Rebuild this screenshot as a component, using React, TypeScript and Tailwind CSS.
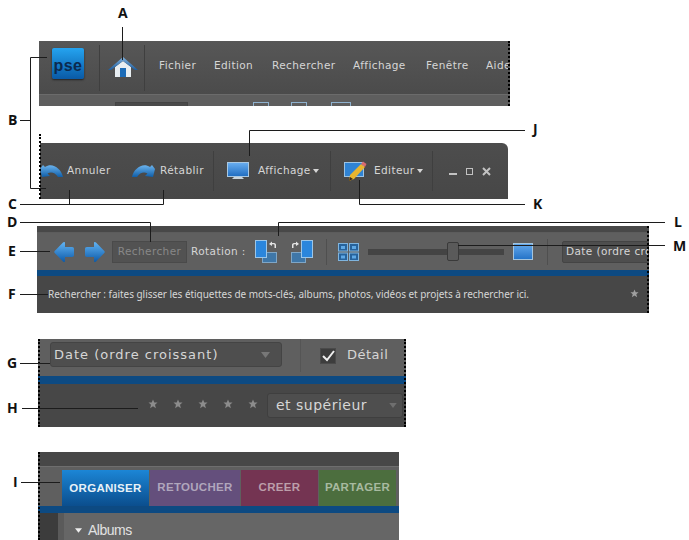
const ui = "font-['DejaVu_Sans',sans-serif] text-[#d6d6d6]";

const Sep = ({ className = "" }: { className?: string }) => <div className={`w-px bg-[#3f3f3f] shrink-0 ${className}`} />;

const Star = ({ color = "#8c8c8c", size = 10 }: { color?: string; size?: number }) => (
  <svg width={size} height={size} viewBox="0 0 10 10" className="shrink-0">
    <path d="M5 .6l1.3 3h3.2L7 5.700l.9 3.500L5 7.300 2.100 9.200 3 5.700.5 3.600h3.200z" fill={color} />
  </svg>
);

const Caret = ({ color = "#d6d6d6", w = 6, h = 4 }: { color?: string; w?: number; h?: number }) => (
  <svg width={w} height={h} viewBox="0 0 6 4" className="shrink-0">
    <path d="M0 0h6L3 4z" fill={color} />
  </svg>
);

const Edge = ({ side }: { side: "left" | "right" }) => (
  <div className={`absolute inset-y-0 w-0 border-l-2 border-dotted border-black ${side === "left" ? "left-0" : "right-0"}`} />
);

const PseLogo = () => (
  <div className="w-[32px] h-[31px] rounded-[2px] bg-gradient-to-b from-[#25a4f0] to-[#0a5aa6] flex items-end justify-center pb-[5px] shadow-[0_1px_2px_#222]">
    <span className="font-['Liberation_Sans',sans-serif] font-bold text-[16px] leading-none text-[#0b2a4f]">pse</span>
  </div>
);

const HomeIcon = () => (
  <svg width="30" height="22" viewBox="0 0 30 22">
    <defs>
      <linearGradient id="roof" x1="0" y1="0" x2="0" y2="1">
        <stop offset="0" stopColor="#7fb2e0" />
        <stop offset="1" stopColor="#1d5c9c" />
      </linearGradient>
    </defs>
    <path d="M7 11l8-6 8 6v10H7z" fill="#e8eef2" />
    <path d="M12 12h6v9h-6z" fill="#1c6cb8" />
    <path d="M0 14L15 1l15 13h-3L15 5 3 14z" fill="url(#roof)" />
  </svg>
);

const UndoIcon = ({ flip = false }: { flip?: boolean }) => (
  <svg width="23" height="14" viewBox="0 0 23 14" className={flip ? "-scale-x-100" : ""}>
    <defs>
      <linearGradient id="undo" x1="0" y1="0" x2="0" y2="1">
        <stop offset="0" stopColor="#6cb4ee" />
        <stop offset="1" stopColor="#0f5ea8" />
      </linearGradient>
    </defs>
    <path d="M0 5l2 8 8-1-2.500-2.500C11 7.500 15 8.500 18 13h5C21 4 12-2 5 3L3 1z" fill="url(#undo)" />
  </svg>
);

const MonitorIcon = () => (
  <svg width="22" height="18" viewBox="0 0 22 18">
    <defs>
      <linearGradient id="screen" x1="0" y1="0" x2="0" y2="1">
        <stop offset="0" stopColor="#69aef0" />
        <stop offset="1" stopColor="#1f6cc0" />
      </linearGradient>
    </defs>
    <rect x=".5" y=".5" width="21" height="14" fill="url(#screen)" stroke="#a9c8e2" />
    <path d="M7 15h8l2 2H5z" fill="#c9d3da" />
  </svg>
);

const EditorIcon = () => (
  <svg width="23" height="21" viewBox="0 0 23 21">
    <rect x=".5" y="1.500" width="19" height="14" fill="#2f83d4" stroke="#9cc3e4" />
    <path d="M6 14L17 3l4 3L10 18l-5 2z" fill="#e8b52e" />
    <path d="M17 3l2-2.400 3.500 2.500L21 6z" fill="#d86a70" />
    <path d="M5 20l1-4 3 2z" fill="#3a2a1a" />
  </svg>
);

const ArrowIcon = ({ flip = false }: { flip?: boolean }) => (
  <svg width="20" height="22" viewBox="0 0 20 22" className={flip ? "-scale-x-100" : ""}>
    <defs>
      <linearGradient id="arrow" x1="0" y1="0" x2="0" y2="1">
        <stop offset="0" stopColor="#62b4f4" />
        <stop offset="1" stopColor="#0c5aa8" />
      </linearGradient>
    </defs>
    <path d="M.7 10L9 1.500c1-1 2-.5 2 .5v4h7c1.500 0 2 .8 2 2v6c0 1.200-.5 2-2 2h-7v4c0 1-1 1.500-2 .5L.7 12c-.6-.6-.6-1.400 0-2z" fill="url(#arrow)" />
  </svg>
);

const RotateIcon = ({ flip = false }: { flip?: boolean }) => (
  <svg width="22" height="23" viewBox="0 0 22 23" className={flip ? "-scale-x-100" : ""}>
    <rect x="7.500" y="12.500" width="14" height="10" fill="#3f77a8" stroke="#7fa6c6" />
    <rect x=".5" y=".5" width="11" height="17" fill="#2b86dc" stroke="#9cc6e8" />
    <path d="M14 4l3-2.500V3h2c1.500 0 2 1 2 2v3h-1.500V5c0-.5-.2-.7-.8-.7H17V6z" fill="#e4e4e4" />
  </svg>
);

const GridIcon = () => (
  <svg width="21" height="18" viewBox="0 0 21 18">
    <g fill="#27639c" stroke="#7fb4de">
      <rect x=".5" y=".5" width="9" height="7.500" />
      <rect x="11.500" y=".5" width="9" height="7.500" />
      <rect x=".5" y="10" width="9" height="7.500" />
      <rect x="11.500" y="10" width="9" height="7.500" />
    </g>
    <g fill="#5fa8e4">
      <rect x="3" y="3" width="4" height="3" />
      <rect x="14" y="3" width="4" height="3" />
      <rect x="3" y="12.500" width="4" height="3" />
      <rect x="14" y="12.500" width="4" height="3" />
    </g>
  </svg>
);

const MenuPanel = () => (
  <section className="relative ml-[39px] w-[471px] h-[65px] flex flex-col overflow-hidden">
    <div className={`h-[53px] bg-gradient-to-b from-[#575757] to-[#4b4b4b] flex items-center pl-[13px] text-[10.5px] tracking-[0.4px] ${ui}`}>
      <div className="mt-[-8px]"><PseLogo /></div>
      <Sep className="h-[46px] ml-[15px]" />
      <div className="ml-[8px] mt-[-1px]"><HomeIcon /></div>
      <Sep className="h-[46px] ml-[6px]" />
      <div className="flex gap-[17px] ml-[14px] mt-[-4px] whitespace-nowrap">
        <span className="w-[38px]">Fichier</span>
        <span className="w-[41px]">Edition</span>
        <span className="w-[64px]">Rechercher</span>
        <span className="w-[56px]">Affichage</span>
        <span className="w-[43px]">Fenêtre</span>
        <span>Aide</span>
      </div>
    </div>
    <div className="h-[12px] border-t border-[#6b6b6b] bg-[#5e5e5e] relative flex items-start pl-[76px] pt-[7px]">
      <div className="w-[73px] h-[6px] bg-[#4a4a4a] border border-[#444]" />
      <div className="w-[16px] h-[5px] border border-[#8fb2cf] ml-[65px]" />
      <div className="w-[16px] h-[5px] border border-[#8fb2cf] ml-[22px]" />
      <div className="w-[20px] h-[5px] border border-[#8fb2cf] ml-[24px]" />
    </div>
    <Edge side="right" />
  </section>
);

const ActionsPanel = () => (
  <section className={`relative ml-[40px] mt-[37px] w-[468px] h-[56px] bg-gradient-to-b from-[#4d4d4d] to-[#474747] rounded-tr-[6px] flex items-center text-[10.5px] tracking-[0.4px] whitespace-nowrap ${ui}`}>
    <div className="flex items-center w-[173px] h-full">
      <UndoIcon />
      <span className="ml-[4px] w-[65px]">Annuler</span>
      <UndoIcon flip />
      <span className="ml-[5px]">Rétablir</span>
    </div>
    <Sep className="h-[40px]" />
    <div className="flex items-center ml-[13px] w-[103px]">
      <MonitorIcon />
      <span className="ml-[9px]">Affichage</span>
      <span className="ml-[2px]"><Caret /></span>
    </div>
    <Sep className="h-[40px]" />
    <div className="flex items-center ml-[13px] w-[88px]">
      <EditorIcon />
      <span className="ml-[7px]">Editeur</span>
      <span className="ml-[2px]"><Caret /></span>
    </div>
    <Sep className="h-[40px]" />
    <div className="flex items-center ml-[16px] gap-[9px] text-[#c2c2c2]">
      <div className="w-[8px] h-[2px] bg-[#c2c2c2] mt-[5px]" />
      <div className="w-[7px] h-[7px] border border-[#c2c2c2]" />
      <svg width="9" height="9" viewBox="0 0 9 9"><path d="M1 1l7 7M8 1l-7 7" stroke="#c2c2c2" strokeWidth="2" /></svg>
    </div>
  </section>
);

const SearchPanel = () => (
  <section className={`relative ml-[37px] mt-[27px] w-[612px] h-[87px] flex flex-col overflow-hidden text-[10.5px] tracking-[0.4px] whitespace-nowrap ${ui}`}>
    <div className="h-[7px] bg-[#484848] border-b border-[#5c5c5c]" />
    <div className="h-[37px] bg-[#5f5f5f] flex items-center pl-[17px]">
      <ArrowIcon />
      <div className="ml-[11px]"><ArrowIcon flip /></div>
      <div className="ml-[7px] w-[75px] h-[22px] bg-[#525252] border border-[#4a4a4a] flex items-center justify-center text-[#888]">Rechercher</div>
      <span className="ml-[4px] w-[64px]">Rotation :</span>
      <RotateIcon />
      <div className="ml-[14px]"><RotateIcon flip /></div>
      <Sep className="h-[26px] ml-[13px] bg-[#4f4f4f]" />
      <div className="ml-[11px]"><GridIcon /></div>
      <div className="relative ml-[9px] w-[136px] h-[6px] bg-[#444] flex items-center">
        <div className="absolute left-[79px] w-[12px] h-[19px] rounded-[2px] bg-[#5a5a5a] border border-[#3a3a3a]" />
      </div>
      <div className="ml-[9px] w-[20px] h-[17px] bg-gradient-to-b from-[#62a8ec] to-[#2474c8] border border-[#a3c4de]" />
      <Sep className="h-[26px] ml-[14px] bg-[#4f4f4f]" />
      <div className="ml-[14px] flex-1 h-[22px] bg-[#4e4e4e] border border-[#444] rounded-l-[2px] flex items-center pl-[3px] overflow-hidden">Date (ordre cro</div>
    </div>
    <div className="h-[6px] bg-[#0d4a82]" />
    <div className="flex-1 bg-[#474747] flex items-center pl-[11px] text-[10px] tracking-[-0.04px] font-['Noto_Sans',sans-serif]">
      <span>Rechercher : faites glisser les étiquettes de mots-clés, albums, photos, vidéos et projets à rechercher ici.</span>
      <div className="absolute right-[10px] bottom-[15px]"><Star color="#a0a0a0" size={9} /></div>
    </div>
    <Edge side="right" />
  </section>
);

const SortPanel = () => (
  <section className={`relative ml-[38px] mt-[26px] w-[368px] h-[88px] flex flex-col text-[13px] tracking-[0.5px] whitespace-nowrap ${ui}`}>
    <div className="h-[37px] bg-[#5f5f5f] flex items-start pl-[12px] pt-[3px]">
      <div className="w-[232px] h-[25px] bg-[#4e4e4e] border border-[#444] rounded-[3px] flex items-center justify-between pl-[3px] pr-[10px] tracking-[1px]">
        <span>Date (ordre croissant)</span>
        <Caret color="#777" w={11} h={6} />
      </div>
      <Sep className="h-[33px] ml-[18px] -mt-[3px] bg-[#555]" />
      <div className="ml-[19px] mt-[6px] w-[16px] h-[16px] bg-[#3d3d3d] border border-[#4a4a4a] flex items-center justify-center">
        <svg width="13" height="12" viewBox="0 0 13 12"><path d="M1 6l4 4 7-9" stroke="#eee" strokeWidth="2" fill="none" /></svg>
      </div>
      <span className="ml-[11px] mt-[3px]">Détail</span>
    </div>
    <div className="h-[8px] bg-[#0d4a82]" />
    <div className="flex-1 bg-[#474747] flex items-start justify-end pt-[9px] pr-[3px]">
      <div className="flex gap-[15px] mt-[6px] mr-[9px]">
        <Star /><Star /><Star /><Star /><Star />
      </div>
      <div className="w-[136px] h-[25px] bg-[#4e4e4e] border border-[#3f3f3f] rounded-[3px] flex items-center justify-between pl-[8px] pr-[4px] text-[14px]">
        <span>et supérieur</span>
        <Caret color="#6f6f6f" w={10} h={5} />
      </div>
    </div>
    <Edge side="left" />
    <Edge side="right" />
  </section>
);

const tabs = [
  { label: "ORGANISER", width: "w-[87px]", cls: "h-[39px] bg-gradient-to-b from-[#1c86d6] to-[#0a4a88] text-[#e8f2f8]" },
  { label: "RETOUCHER", width: "w-[90px]", cls: "h-[36px] bg-[#644f7c] text-[#b0a6bc]" },
  { label: "CREER", width: "w-[77px]", cls: "h-[36px] bg-[#743452] text-[#bc9eaa]" },
  { label: "PARTAGER", width: "w-[77px]", cls: "h-[36px] bg-[#4c6e3e] text-[#a8baa0]" },
];

const WorkspacePanel = () => (
  <section className="relative ml-[38px] mt-[25px] w-[361px] h-[88px] flex flex-col overflow-hidden whitespace-nowrap">
    <div className="h-[14px] bg-[#474747]" />
    <div className="h-[40px] bg-[#5f5f5f] border-t border-[#6e6e6e] flex items-start pl-[24px] pt-[3px] gap-px">
      {tabs.map((t) => (
        <div key={t.label} className={`${t.width} ${t.cls} flex items-center justify-center font-['Liberation_Sans',sans-serif] font-bold text-[11.5px] tracking-[0.3px]`}>
          <span className="-mt-[1px]">{t.label}</span>
        </div>
      ))}
    </div>
    <div className="h-[7px] bg-[#0d4a82]" />
    <div className="flex-1 flex">
      <div className="w-[20px] bg-[#3c3c3c]" />
      <div className="w-[6px] bg-[#5a5a5a]" />
      <div className="flex-1 bg-[#666] flex items-start pt-[8px] pl-[11px] gap-[6px] text-[#e2e2e2] text-[14px] tracking-[-0.5px] leading-[18px] font-['Liberation_Sans',sans-serif]">
        <span className="mt-[7px]"><Caret color="#eee" w={7} h={5} /></span>
        <span>Albums</span>
      </div>
    </div>
    <Edge side="left" />
  </section>
);

const leaders = [
  "M122.500 27V60",
  "M20 120.500H30.500M47 57.500H30.500V188.500H46",
  "M20 204.500H163.500V190M69.500 204.500V190",
  "M525 130.500H249.500V156",
  "M525 204.500H359.500V180",
  "M20 222.500H150.500V242",
  "M20 251.500H50",
  "M20 294.500H48",
  "M665 222.500H278.500V236",
  "M665 245.500H458",
  "M20 363.500H50",
  "M22 408.500H138",
  "M21 482.500H60",
];

const labels = [
  { t: "A", cls: "left-[118px] top-[4px]" },
  { t: "B", cls: "left-[8px] top-[111px]" },
  { t: "C", cls: "left-[8px] top-[195px]" },
  { t: "J", cls: "left-[533px] top-[120px]" },
  { t: "K", cls: "left-[533px] top-[195px]" },
  { t: "D", cls: "left-[7px] top-[213px]" },
  { t: "L", cls: "left-[674px] top-[213px]" },
  { t: "E", cls: "left-[8px] top-[242px]" },
  { t: "M", cls: "left-[673px] top-[237px]" },
  { t: "F", cls: "left-[8px] top-[285px]" },
  { t: "G", cls: "left-[7px] top-[354px]" },
  { t: "H", cls: "left-[7px] top-[399px]" },
  { t: "I", cls: "left-[13px] top-[473px]" },
];

export default function App() {
  return (
    <div className="relative w-[689px] h-[540px] bg-white overflow-hidden pt-[41px] flex flex-col">
      <MenuPanel />
      <ActionsPanel />
      <SearchPanel />
      <SortPanel />
      <WorkspacePanel />
      <div className="absolute left-[39px] top-[134px] h-[65px] w-0 border-l-2 border-dotted border-black" />
      <svg width="689" height="540" className="absolute inset-0 pointer-events-none">
        {leaders.map((d) => (
          <path key={d} d={d} fill="none" stroke="#1c1c1c" strokeWidth="1" />
        ))}
      </svg>
      {labels.map((l) => (
        <span key={l.t} className={`absolute ${l.cls} font-['Open_Sans',sans-serif] font-bold text-[14px] leading-[18px] text-[#111]`}>
          {l.t}
        </span>
      ))}
    </div>
  );
}
